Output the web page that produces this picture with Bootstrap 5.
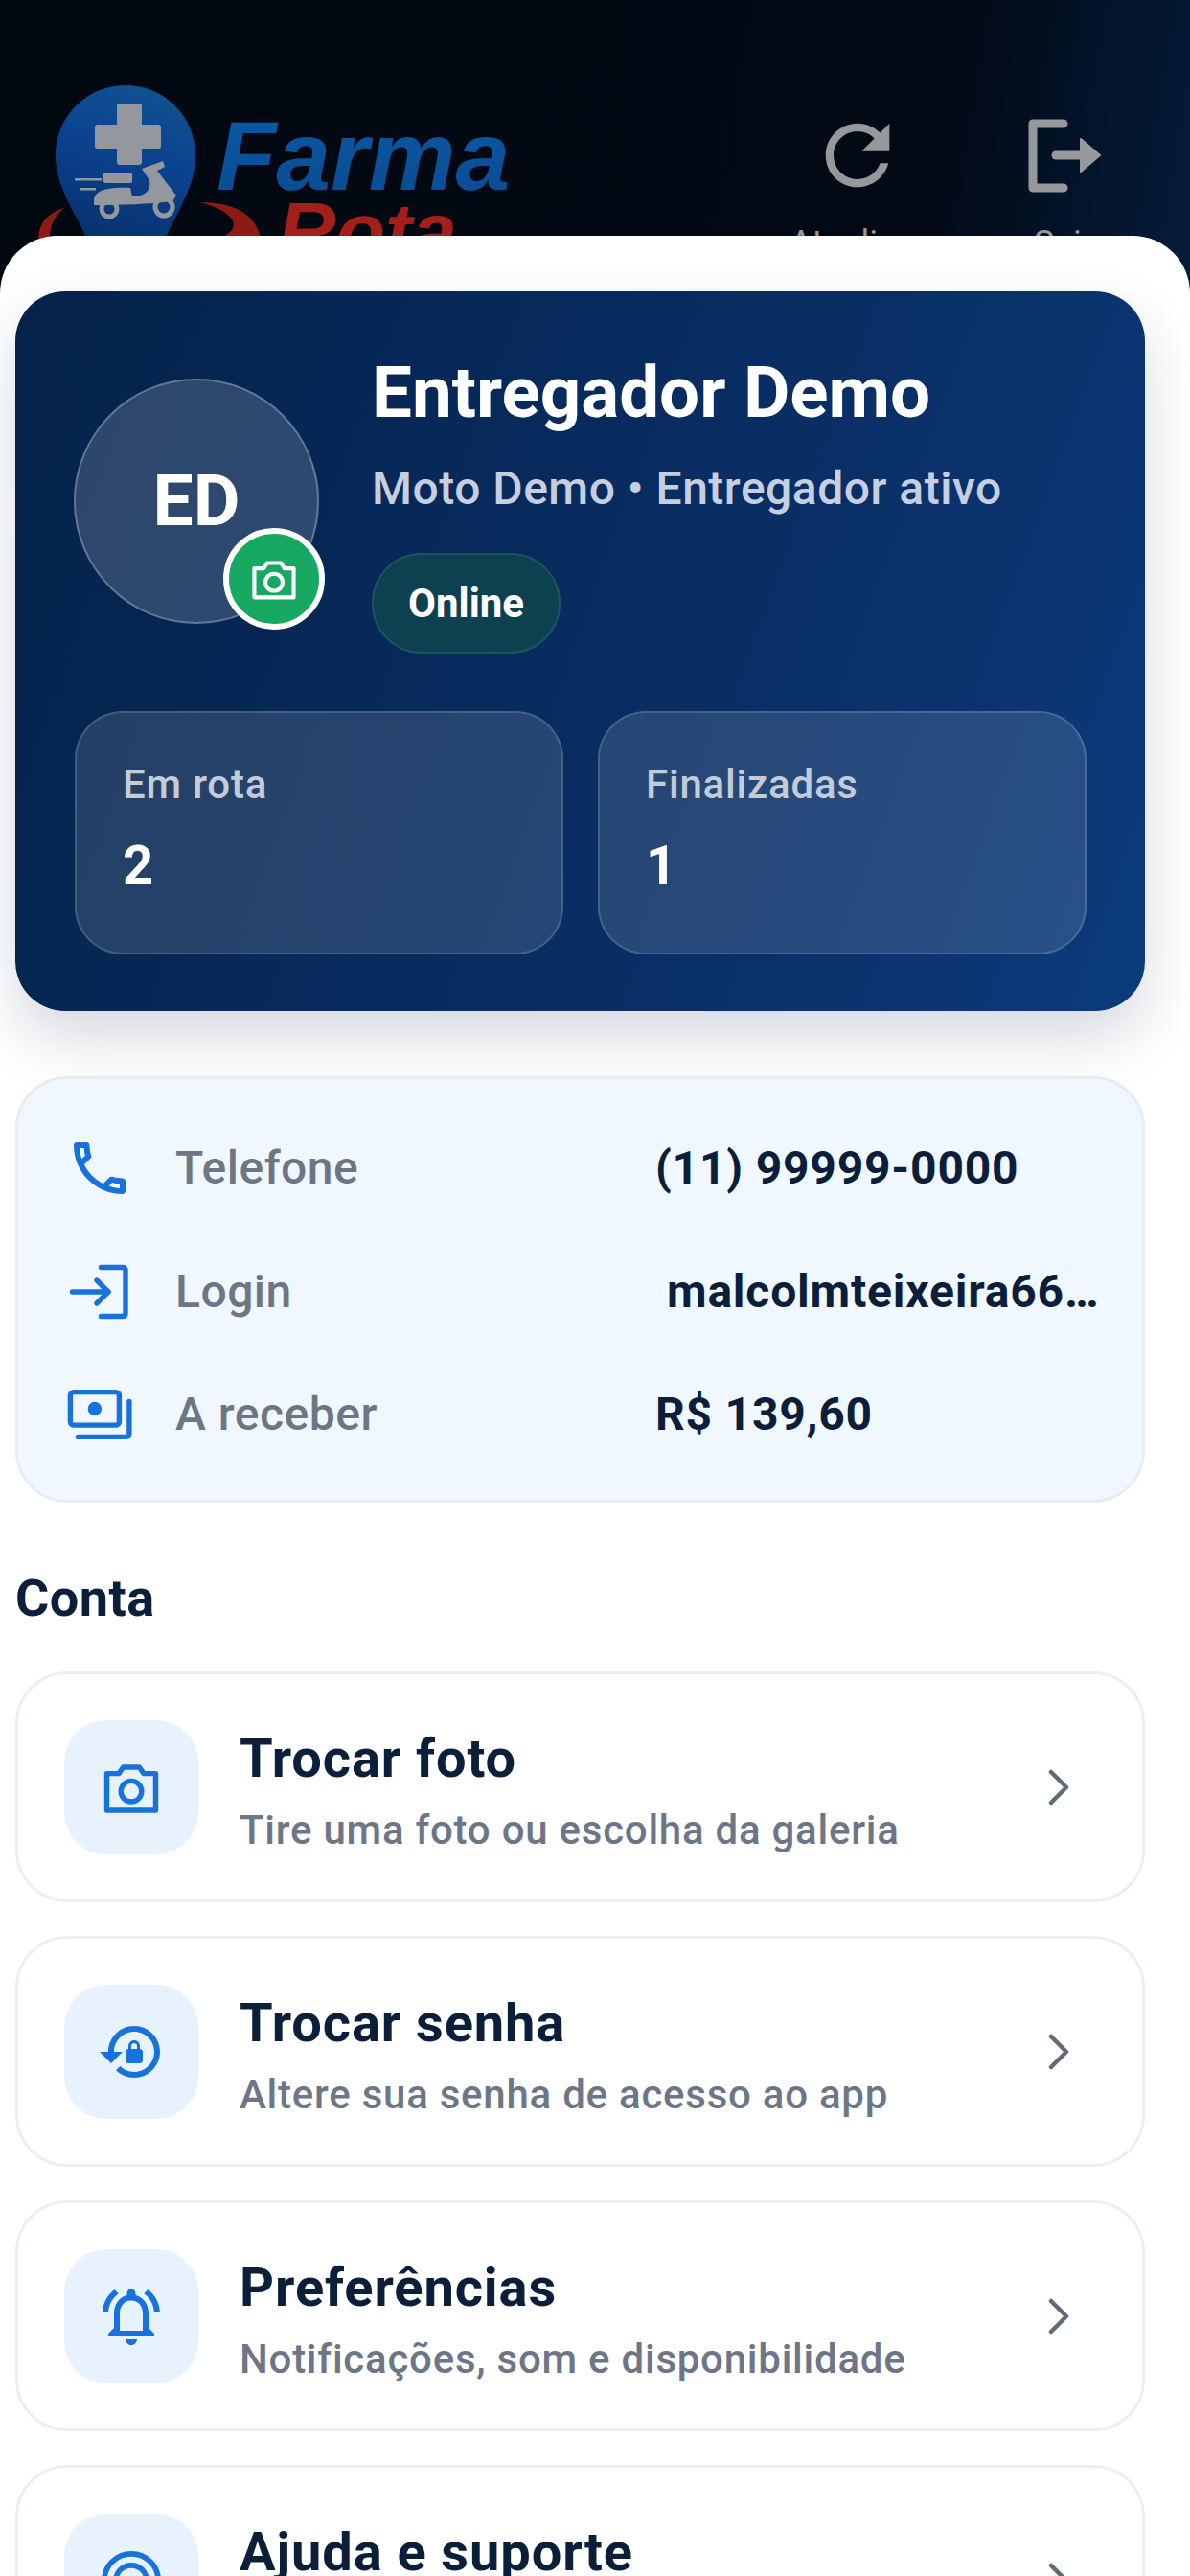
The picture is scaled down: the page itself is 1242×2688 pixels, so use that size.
<!DOCTYPE html>
<html lang="pt-BR">
<head>
<meta charset="utf-8">
<title>Perfil do entregador</title>
<link href="https://cdn.jsdelivr.net/npm/bootstrap@5.3.0/dist/css/bootstrap.min.css" rel="stylesheet">
<style>
html,body{height:2688px;overflow:hidden;}
body{font-family:Roboto,"Liberation Sans",sans-serif;background:#020812;color:#0b1f3a;}
.app-head{height:300px;padding:70px 52px 0 40px;background:linear-gradient(100deg,#020810 0%,#020a16 78%,#051c3a 100%);}
.logo-art{width:520px;height:190px;display:block;flex:none;}
.logo-farma{font:italic 700 102px "Liberation Sans",sans-serif;}
.logo-rota{font:italic 700 84px "Liberation Sans",sans-serif;fill:#a41f1a;}
.head-actions{margin-top:42px;gap:55px;}
.head-action{width:160px;color:#97989c;font-size:36px;line-height:36px;}
.head-action svg{width:100px;height:100px;display:block;margin-bottom:24px;}
.sheet{margin-top:-54px;height:2442px;position:relative;background:#fff;border-radius:60px 60px 0 0;padding:58px 47px 0 16px;overflow:hidden;}
.hero{background:linear-gradient(110deg,#04224a 0%,#0a3068 68%,#0b3b7c 100%);border-radius:52px;padding:63px 61px 59px 62px;color:#fff;box-shadow:0 28px 60px rgba(10,30,70,.17);}
.avatar-ring{width:256px;height:256px;margin-left:-1px;margin-right:-1px;margin-bottom:4px;border-radius:50%;background:rgba(255,255,255,.16);border:2px solid rgba(255,255,255,.26);font-size:75px;font-weight:700;flex:none;position:relative;}
.avatar-cam{position:absolute;left:154px;top:154px;width:106px;height:106px;border-radius:50%;background:#17a862;border:6px solid #fff;}
.avatar-cam svg{width:58px;height:58px;}
.hero-main{margin-left:56px;}
.hero-name{font-size:74.5px;line-height:86px;font-weight:700;margin:0;}
.hero-sub{font-size:48px;line-height:54px;font-weight:500;color:#c5cfe0;margin:30px 0 40px;letter-spacing:.5px;}
.hero-pill{height:105px;width:197px;border-radius:52px;background:#0e4150;border:2px solid #1a5560;font-size:42px;font-weight:700;}
.hero-stats{margin-top:60px;gap:36px;}
.hero-stat{flex:1 1 0;height:254px;border-radius:50px;background:rgba(255,255,255,.12);border:2px solid rgba(255,255,255,.15);padding:51px 48px 0;}
.stat-label{font-size:42px;line-height:48px;font-weight:500;color:#c3cbd9;letter-spacing:.8px;}
.stat-value{font-size:56px;line-height:66px;font-weight:700;margin-top:27px;}
.info-box{margin-top:68px;height:445px;background:#f1f7ff;border:3px solid #e6edf5;border-radius:54px;padding:57px 0 0 49px;gap:56.5px;}
.info-row{height:72px;}
.info-icon{width:72px;height:72px;flex:none;color:#1672dc;}
.info-label{width:544px;padding-left:43px;flex:none;font-size:48px;font-weight:500;color:#6d7686;letter-spacing:.5px;}
.info-value{font-size:48px;font-weight:700;color:#0b1f3a;letter-spacing:.8px;white-space:nowrap;}
.info-value-inset{padding-left:12px;}
.section-title{font-size:54px;line-height:66px;font-weight:700;margin:67px 0 43px;color:#0b1f3a;letter-spacing:.5px;}
.menu-list{gap:35px;}
.menu-item{height:241px;background:#fff;border:3px solid #ebeff4;border-radius:54px;padding-left:48px;padding-right:75px;}
.menu-tile{width:140px;height:140px;border-radius:44px;background:#e8f2fd;color:#1672dc;flex:none;}
.menu-tile svg{width:72px;height:72px;}
.menu-text{margin-left:43px;padding-top:10px;}
.menu-title{font-size:56px;line-height:66px;font-weight:700;color:#0b1f3a;letter-spacing:.9px;}
.menu-sub{font-size:42px;line-height:54px;font-weight:500;color:#6d7686;margin-top:15px;letter-spacing:.75px;}
.menu-sub-empty{height:54px;}
.menu-chevron{width:24px;height:38px;flex:none;color:#5f6b7a;}
</style>
</head>
<body>
<header class="app-head d-flex justify-content-between align-items-start">
  <svg class="logo-art" viewBox="0 0 520 190" role="img" aria-label="FarmaRota">
    <defs>
      <linearGradient id="pinFill" x1=".7" y1="0" x2=".4" y2="1"><stop offset="0" stop-color="#10528f"/><stop offset=".45" stop-color="#0b4291"/><stop offset="1" stop-color="#08336f"/></linearGradient>
      <linearGradient id="farmaFill" x1="0" y1="0" x2="0" y2="1"><stop offset="0" stop-color="#0a5aa6"/><stop offset="1" stop-color="#0a4a90"/></linearGradient>
    </defs>
    <path d="M0 178C1 162 10 152 27 147C17 155 12 165 12 178Z" fill="#8e1a16"/>
    <path d="M168 141C200 141 225 150 232 178L190 178C215 168 205 150 168 141Z" fill="#8e1a16"/>
    <path d="M91 19C132 19 164 52 164 92C164 125 145 150 133 178L50 178C38 150 18 125 18 92C18 52 50 19 91 19Z" fill="url(#pinFill)"/>
    <g fill="#94979d">
      <rect x="82" y="38" width="26" height="64" rx="3"/>
      <rect x="59" y="60" width="69" height="25" rx="3"/>
      <rect x="68" y="110" width="30" height="11" rx="2"/>
      <path d="M58 140C58 130 68 125 96 126L98 135C110 135 118 130 116 118L108 106L130 98L132 104L124 108L144 134L140 140C115 143 85 144 58 144Z"/>
      <rect x="38" y="116" width="28" height="2.5"/><rect x="44" y="126" width="16" height="2.5"/>
    </g>
    <g fill="none" stroke="#94979d" stroke-width="5"><circle cx="74" cy="148" r="8"/><circle cx="131" cy="146" r="9"/></g>
    <text class="logo-farma" x="186" y="128" fill="url(#farmaFill)">Farma</text>
    <text class="logo-rota" x="250" y="200">Rota</text>
  </svg>
  <div class="head-actions d-flex">
    <div class="head-action d-flex flex-column align-items-center">
      <svg viewBox="0 0 24 24" fill="currentColor"><path d="M17.65 6.35C16.2 4.9 14.21 4 12 4c-4.42 0-7.99 3.58-7.99 8s3.57 8 7.99 8c3.73 0 6.84-2.55 7.73-6h-2.08c-.82 2.33-3.04 4-5.65 4-3.31 0-6-2.69-6-6s2.69-6 6-6c1.66 0 3.14.69 4.22 1.78L13 11h7V4l-2.35 2.35z"/></svg>
      <span>Atualizar</span>
    </div>
    <div class="head-action d-flex flex-column align-items-center">
      <svg viewBox="0 0 100 100" fill="none" stroke="currentColor" stroke-width="9" stroke-linecap="round" stroke-linejoin="round"><path d="M50 17H18V84H50"/><path d="M42 50H68"/><path d="M68 33L88 50L68 67Z" fill="currentColor" stroke-width="2"/></svg>
      <span>Sair</span>
    </div>
  </div>
</header>
<main class="sheet">
  <section class="hero">
    <div class="d-flex align-items-center">
      <div class="avatar-ring d-flex align-items-center justify-content-center">
        ED
        <span class="avatar-cam d-flex align-items-center justify-content-center">
          <svg viewBox="0 0 24 24" fill="none" stroke="#fff" stroke-width="1.7" stroke-linejoin="round"><path d="M3.5 7.5H7.5L9 5.2H15L16.5 7.5H20.5V20H3.5Z"/><circle cx="12" cy="13.5" r="3.7"/></svg>
        </span>
      </div>
      <div class="hero-main">
        <h1 class="hero-name">Entregador Demo</h1>
        <p class="hero-sub">Moto Demo • Entregador ativo</p>
        <div class="hero-pill d-flex align-items-center justify-content-center">Online</div>
      </div>
    </div>
    <div class="hero-stats d-flex">
      <div class="hero-stat"><div class="stat-label">Em rota</div><div class="stat-value">2</div></div>
      <div class="hero-stat"><div class="stat-label">Finalizadas</div><div class="stat-value">1</div></div>
    </div>
  </section>

  <section class="info-box d-flex flex-column">
    <div class="info-row d-flex align-items-center">
      <svg class="info-icon" viewBox="0 0 24 24" fill="currentColor"><path d="M6.54 5c.06.89.21 1.76.45 2.59l-1.2 1.2c-.41-1.2-.67-2.47-.76-3.79h1.51m9.86 12.02c.85.24 1.72.39 2.6.45v1.49c-1.32-.09-2.59-.35-3.8-.75l1.2-1.19M7.5 3H4c-.55 0-1 .45-1 1 0 9.39 7.61 17 17 17 .55 0 1-.45 1-1v-3.49c0-.55-.45-1-1-1-1.24 0-2.45-.2-3.57-.57-.1-.04-.21-.05-.31-.05-.26 0-.51.1-.71.29l-2.2 2.2c-2.83-1.45-5.15-3.76-6.59-6.59l2.2-2.2c.28-.28.36-.67.25-1.02C8.7 6.45 8.5 5.25 8.5 4c0-.55-.45-1-1-1z"/></svg>
      <span class="info-label">Telefone</span><span class="info-value">(11) 99999-0000</span>
    </div>
    <div class="info-row d-flex align-items-center">
      <svg class="info-icon" viewBox="0 0 24 24" fill="none" stroke="currentColor" stroke-width="1.8" stroke-linecap="round" stroke-linejoin="round"><path d="M2.5 12H15"/><path d="M11 8L15 12L11 16"/><path d="M12.5 3.5H20.2A.8.8 0 0 1 21 4.3V19.7A.8.8 0 0 1 20.2 20.5H12.5"/></svg>
      <span class="info-label">Login</span><span class="info-value info-value-inset">malcolmteixeira66…</span>
    </div>
    <div class="info-row d-flex align-items-center">
      <svg class="info-icon" viewBox="0 0 24 24" fill="none" stroke="currentColor" stroke-width="1.8" stroke-linecap="round" stroke-linejoin="round"><rect x="1.8" y="4.2" width="17" height="11.5" rx="1.2"/><circle cx="10.3" cy="10" r="2.4" fill="currentColor" stroke="none"/><path d="M22.3 7.5V18.6A1.2 1.2 0 0 1 21.1 19.8H4.5"/></svg>
      <span class="info-label">A receber</span><span class="info-value">R$ 139,60</span>
    </div>
  </section>

  <h2 class="section-title">Conta</h2>

  <nav class="menu-list d-flex flex-column">
    <div class="menu-item d-flex align-items-center flex-shrink-0">
      <span class="menu-tile d-flex align-items-center justify-content-center">
        <svg viewBox="0 0 24 24" fill="none" stroke="currentColor" stroke-width="1.8" stroke-linejoin="round"><path d="M3.5 7.2H7.7L9.2 5H14.8L16.3 7.2H20.5V20H3.5Z"/><circle cx="12" cy="13.4" r="3.6"/></svg>
      </span>
      <div class="menu-text flex-grow-1"><div class="menu-title">Trocar foto</div><div class="menu-sub">Tire uma foto ou escolha da galeria</div></div>
      <svg class="menu-chevron" viewBox="0 0 24 38" fill="none" stroke="currentColor" stroke-width="4.5" stroke-linecap="round" stroke-linejoin="round"><path d="M4 3L20 19L4 35"/></svg>
    </div>
    <div class="menu-item d-flex align-items-center flex-shrink-0">
      <span class="menu-tile d-flex align-items-center justify-content-center">
        <svg viewBox="0 0 24 24" fill="currentColor"><path d="M13 3c-4.97 0-9 4.03-9 9H1l4 3.99L9 12H6c0-3.87 3.13-7 7-7s7 3.13 7 7-3.13 7-7 7c-1.9 0-3.62-.76-4.88-1.99L6.7 18.42C8.32 20.01 10.55 21 13 21c4.97 0 9-4.03 9-9s-4.03-9-9-9zm2 8v-1c0-1.1-.9-2-2-2s-2 .9-2 2v1c-.55 0-1 .45-1 1v3c0 .55.45 1 1 1h4c.55 0 1-.45 1-1v-3c0-.55-.45-1-1-1zm-1 0h-2v-1c0-.55.45-1 1-1s1 .45 1 1v1z"/></svg>
      </span>
      <div class="menu-text flex-grow-1"><div class="menu-title">Trocar senha</div><div class="menu-sub">Altere sua senha de acesso ao app</div></div>
      <svg class="menu-chevron" viewBox="0 0 24 38" fill="none" stroke="currentColor" stroke-width="4.5" stroke-linecap="round" stroke-linejoin="round"><path d="M4 3L20 19L4 35"/></svg>
    </div>
    <div class="menu-item d-flex align-items-center flex-shrink-0">
      <span class="menu-tile d-flex align-items-center justify-content-center">
        <svg viewBox="0 0 24 24" fill="currentColor"><path d="M12 22c1.1 0 2-.9 2-2h-4c0 1.1.9 2 2 2zm6-6v-5c0-3.07-1.63-5.64-4.5-6.32V4c0-.83-.67-1.5-1.5-1.5s-1.5.67-1.5 1.5v.68C7.64 5.36 6 7.92 6 11v5l-2 2v1h16v-1l-2-2zm-2 1H8v-6c0-2.48 1.51-4.5 4-4.5s4 2.02 4 4.5v6zM7.58 4.08 6.15 2.65C3.75 4.48 2.17 7.3 2.03 10.5h2c.15-2.65 1.51-4.97 3.55-6.42zM19.97 10.5h2c-.15-3.2-1.73-6.02-4.12-7.85l-1.42 1.43c2.02 1.45 3.39 3.77 3.54 6.42z"/></svg>
      </span>
      <div class="menu-text flex-grow-1"><div class="menu-title">Preferências</div><div class="menu-sub">Notificações, som e disponibilidade</div></div>
      <svg class="menu-chevron" viewBox="0 0 24 38" fill="none" stroke="currentColor" stroke-width="4.5" stroke-linecap="round" stroke-linejoin="round"><path d="M4 3L20 19L4 35"/></svg>
    </div>
    <div class="menu-item d-flex align-items-center flex-shrink-0">
      <span class="menu-tile d-flex align-items-center justify-content-center">
        <svg viewBox="0 0 24 24" fill="none" stroke="currentColor" stroke-width="1.9"><circle cx="12" cy="12" r="9.4"/><circle cx="12" cy="12" r="5.4"/></svg>
      </span>
      <div class="menu-text flex-grow-1"><div class="menu-title">Ajuda e suporte</div><div class="menu-sub menu-sub-empty"></div></div>
      <svg class="menu-chevron" viewBox="0 0 24 38" fill="none" stroke="currentColor" stroke-width="4.5" stroke-linecap="round" stroke-linejoin="round"><path d="M4 3L20 19L4 35"/></svg>
    </div>
  </nav>
</main>
<script src="https://cdn.jsdelivr.net/npm/bootstrap@5.3.0/dist/js/bootstrap.bundle.min.js"></script>
</body>
</html>
